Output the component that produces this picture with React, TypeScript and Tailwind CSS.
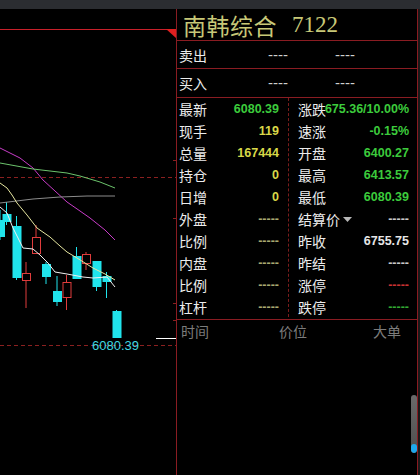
import React from 'react'

type Cell = {
  label: string
  value: string
  color: string
  caret?: boolean
}

const GREEN = 'text-[#3ccb3c]'
const YELLOW = 'text-[#d8d848]'

const leftCells: Cell[] = [
  { label: '最新', value: '6080.39', color: GREEN },
  { label: '现手', value: '119', color: YELLOW },
  { label: '总量', value: '167444', color: YELLOW },
  { label: '持仓', value: '0', color: YELLOW },
  { label: '日增', value: '0', color: YELLOW },
  { label: '外盘', value: '-----', color: 'text-[#a8a870]' },
  { label: '比例', value: '-----', color: 'text-[#a8a870]' },
  { label: '内盘', value: '-----', color: 'text-[#a8a870]' },
  { label: '比例', value: '-----', color: 'text-[#a8a870]' },
  { label: '杠杆', value: '-----', color: 'text-[#a8a870]' },
]

const rightCells: Cell[] = [
  { label: '涨跌', value: '675.36/10.00%', color: GREEN },
  { label: '速涨', value: '-0.15%', color: GREEN },
  { label: '开盘', value: '6400.27', color: GREEN },
  { label: '最高', value: '6413.57', color: GREEN },
  { label: '最低', value: '6080.39', color: GREEN },
  { label: '结算价', value: '-----', color: 'text-[#c8c8c8]', caret: true },
  { label: '昨收', value: '6755.75', color: 'text-[#e6e6e6]' },
  { label: '昨结', value: '-----', color: 'text-[#c8c8c8]' },
  { label: '涨停', value: '-----', color: 'text-[#c83232]' },
  { label: '跌停', value: '-----', color: 'text-[#32a832]' },
]

// center x, body top, body bottom, high, low, rising (hollow red)
const candles: [number, number, number, number, number, boolean][] = [
  [0, 220, 237, 210, 240, false],
  [6.5, 214, 222, 202, 225, false],
  [16.5, 226, 278, 216, 280, false],
  [26, 273, 281, 262, 308, true],
  [36, 237, 254, 225, 254, true],
  [46, 264, 277, 262, 284, false],
  [57, 291, 302, 276, 306, false],
  [66.5, 282, 298, 275, 310, true],
  [76.5, 256, 279, 247, 279, false],
  [86, 254, 264, 252, 270, true],
  [96.5, 261, 287, 261, 291, false],
  [106.5, 276, 282, 272, 298, false],
  [116.5, 311, 338, 310, 338, false],
]

const maLines = [
  { color: '#c83cc8', pts: '0,148 20,158 33,168 43,180 55,191 67,202 80,211 90,218 105,230 115,240' },
  { color: '#6cc46c', pts: '0,163 33,169 67,173 80,176 90,179 100,182 110,186 115,188' },
  { color: '#8c8c8c', pts: '0,203 33,199 60,197 87,196 115,196' },
  { color: '#e6e6a0', pts: '0,183 7,188 12,195 17,203 27,215 37,228 50,237 60,246 67,252 77,258 93,268 105,274 115,280' },
  { color: '#f0f0f0', pts: '0,207 7,213 13,228 23,248 33,249 40,255 48,263 55,272 67,274 83,277 93,278 107,277 115,287' },
]

function Chart() {
  return (
    <svg width="176" height="466" viewBox="0 9 176 466" className="block">
      <line x1="0" y1="29.5" x2="176" y2="29.5" stroke="#c8202a" strokeWidth="1" />
      <polygon points="166,29 176,29 176,38" fill="#e02020" />
      <line x1="0" y1="177.5" x2="176" y2="177.5" stroke="#8b2020" strokeDasharray="4 3" />
      <line x1="0" y1="345.5" x2="176" y2="345.5" stroke="#8b2020" strokeDasharray="4 3" />
      {[160, 218, 303, 320].map((y) => (
        <line key={y} x1="173" y1={y + 0.5} x2="176" y2={y + 0.5} stroke="#8b2020" />
      ))}
      {candles.map(([cx, top, bot, hi, lo, up], i) =>
        up ? (
          <g key={i} stroke="#e03c3c" fill="none">
            <line x1={cx} y1={hi} x2={cx} y2={top} />
            <line x1={cx} y1={bot} x2={cx} y2={lo} />
            <rect x={cx - 3.5} y={top + 0.5} width="8" height={bot - top - 1} />
          </g>
        ) : (
          <g key={i}>
            <line x1={cx} y1={hi} x2={cx} y2={lo} stroke="#20e4ec" />
            <rect x={cx - 4} y={top} width="9" height={bot - top} fill="#20e4ec" />
          </g>
        )
      )}
      {maLines.map((l) => (
        <polyline key={l.color} points={l.pts} fill="none" stroke={l.color} strokeWidth="1" />
      ))}
      <line x1="156" y1="338.5" x2="176" y2="338.5" stroke="#ffffff" />
    </svg>
  )
}

function DataColumn({ cells, left }: { cells: Cell[]; left?: boolean }) {
  return (
    <div
      className={
        left
          ? 'w-[112px] border-r border-dashed border-[#7a1c1c] flex flex-col'
          : 'flex-1 min-w-0 flex flex-col'
      }
    >
      {cells.map((c, i) => (
        <div
          key={i}
          className={
            left
              ? 'h-[22px] flex items-center pl-[2px] pr-[9px]'
              : 'h-[22px] flex items-center pl-[9px] pr-[8px]'
          }
        >
          <div className="flex-1 min-w-0 flex items-center whitespace-nowrap text-[14px] text-[#ececec]">
            {c.label}
            {c.caret && (
              <svg width="9" height="5" viewBox="0 0 9 5" className="ml-[3px] shrink-0">
                <polygon points="0,0 9,0 4.5,5" fill="#b8b8b8" />
              </svg>
            )}
          </div>
          <span
            className={`whitespace-nowrap font-['Liberation_Sans',sans-serif] font-bold text-[12.5px] ${c.color}`}
          >
            {c.value}
          </span>
        </div>
      ))}
    </div>
  )
}

export default function App() {
  return (
    <div className="w-[420px] h-[475px] bg-black overflow-hidden flex flex-col font-['Noto_Sans_CJK_SC',sans-serif] leading-[22px]">
      <div className="h-[9px] shrink-0 bg-[#2b2d31]" />
      <div className="flex flex-1 min-h-0">
        {/* K-line chart */}
        <div className="relative w-[176px] shrink-0">
          <Chart />
          <span className="absolute left-[92px] top-[329px] leading-[16px] text-[13px] text-[#40d8e0] font-['Liberation_Sans',sans-serif]">
            6080.39
          </span>
        </div>

        {/* Quote panel */}
        <div className="relative w-[242px] shrink-0 border-l border-r border-[#8a1c22] flex flex-col">
          <div className="h-[32px] border-b border-[#8a1c22] flex items-center pl-[6px] text-[#c8c878]">
            <span className="text-[23px] leading-[32px] tracking-[0.5px]">南韩综合</span>
            <span className="ml-[15px] text-[23px] leading-[32px] font-['Liberation_Serif',serif]">7122</span>
          </div>
          <div className="h-[28px] border-b border-[#8a1c22] flex items-center pl-[2px] text-[14px] text-[#ececec]">
            <span className="w-[89px]">卖出</span>
            <span className="w-[67px] text-[15px] text-[#d0d0d0] font-['Liberation_Sans',sans-serif]">----</span>
            <span className="text-[15px] text-[#d0d0d0] font-['Liberation_Sans',sans-serif]">----</span>
          </div>
          <div className="h-[29px] border-b border-[#8a1c22] flex items-center pl-[2px] text-[14px] text-[#ececec]">
            <span className="w-[89px]">买入</span>
            <span className="w-[67px] text-[15px] text-[#d0d0d0] font-['Liberation_Sans',sans-serif]">----</span>
            <span className="text-[15px] text-[#d0d0d0] font-['Liberation_Sans',sans-serif]">----</span>
          </div>
          <div className="flex h-[222px] pb-[2px] border-b border-[#8a1c22]">
            <DataColumn cells={leftCells} left />
            <DataColumn cells={rightCells} />
          </div>
          <div className="h-[22px] flex items-center text-[14px] text-[#7c7c7c]">
            <span className="w-[102px] pl-[4px]">时间</span>
            <span className="w-[94px]">价位</span>
            <span>大单</span>
          </div>
          <div className="flex-1" />
          <div className="absolute right-[0px] top-[386px] w-[6px] h-[58px] rounded-full bg-gradient-to-b from-[#6a6a6a] to-[#4e4e4e] overflow-hidden flex flex-col justify-end">
            <div className="h-[9px] rounded-full bg-[#1ea8ec]" />
          </div>
        </div>
        <div className="flex-1 bg-[#1a1a1a]" />
      </div>
    </div>
  )
}
